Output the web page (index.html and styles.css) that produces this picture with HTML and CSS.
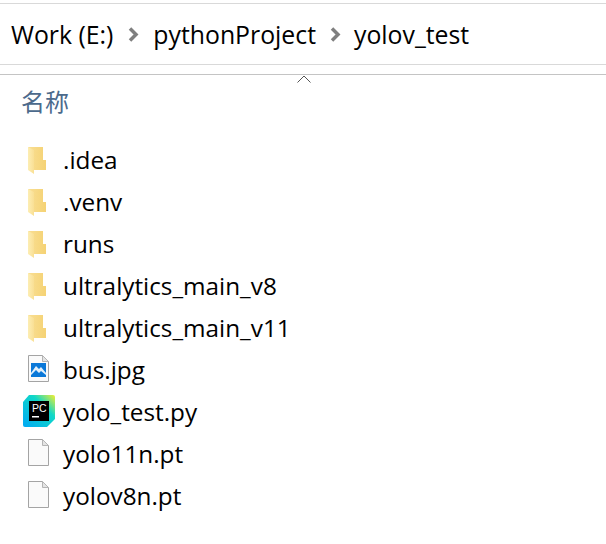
FILE: index.html
```html
<!DOCTYPE html>
<html lang="zh-CN">
<head>
    <meta charset="UTF-8">
    <meta name="viewport" content="width=device-width, initial-scale=1.0">
    <title>yolov_test</title>
    <link rel="stylesheet" href="styles.css">
</head>
<body>
    <svg class="icon-defs" width="0" height="0">
        <defs>
            <linearGradient id="folder-back" x1="0" y1="0" x2="1" y2="0">
                <stop offset="0" stop-color="#f9df94"/>
                <stop offset="1" stop-color="#f5d274"/>
            </linearGradient>
            <linearGradient id="folder-front" x1="0" y1="0" x2="1" y2="0">
                <stop offset="0" stop-color="#fdeeb4"/>
                <stop offset="1" stop-color="#f9df94"/>
            </linearGradient>
            <linearGradient id="pc-logo" x1="0" y1="1" x2="1" y2="0">
                <stop offset="0" stop-color="#00a8f4"/>
                <stop offset="0.65" stop-color="#10d8c8"/>
                <stop offset="1" stop-color="#f4ee30"/>
            </linearGradient>
            <symbol id="folder" viewBox="0 0 18 27">
                <path d="M0 0h15v13h3v10H6v-2z" fill="url(#folder-back)"/>
                <path d="M0 0l6 3v24l-6-4z" fill="url(#folder-front)"/>
            </symbol>
            <symbol id="file" viewBox="0 0 21 27">
                <path d="M.5.5h14l6 6v20H.5z" fill="#fafafa" stroke="#a4a4a4"/>
                <path d="M14.500.5v6h6z" fill="#e4e4e4" stroke="#b4b4b4"/>
            </symbol>
        </defs>
    </svg>

    <nav class="crumbs">
        <span>Work (E:)</span>
        <svg class="crumb-sep" viewBox="0 0 11 15"><path d="M2 1.500l6 6-6 6" fill="none" stroke="#7f7f7f" stroke-width="3.500"/></svg>
        <span>pythonProject</span>
        <svg class="crumb-sep crumb-sep-last" viewBox="0 0 11 15"><path d="M2 1.500l6 6-6 6" fill="none" stroke="#7f7f7f" stroke-width="3.500"/></svg>
        <span>yolov_test</span>
    </nav>

    <div class="col-head">
        <svg class="sort-arrow" viewBox="0 0 14 8"><path d="M.5 7.500L7 1l6.500 6.500" fill="none" stroke="#555" stroke-width="1"/></svg>
        <span class="col-name">名称</span>
    </div>

    <ul class="files">
        <li><svg class="icon icon-folder"><use href="#folder"/></svg>.idea</li>
        <li><svg class="icon icon-folder"><use href="#folder"/></svg>.venv</li>
        <li><svg class="icon icon-folder"><use href="#folder"/></svg>runs</li>
        <li><svg class="icon icon-folder"><use href="#folder"/></svg>ultralytics_main_v8</li>
        <li><svg class="icon icon-folder"><use href="#folder"/></svg>ultralytics_main_v11</li>
        <li>
            <svg class="icon icon-file" viewBox="0 0 21 27">
                <use href="#file" width="21" height="27"/>
                <rect x="3" y="8" width="15" height="14" fill="#0a78d8"/>
                <path d="M3 18l5-7 3 3 2-2 5 6v2l-5-4-2 2-3-3-5 5z" fill="#e2f0fb"/>
            </svg>
            bus.jpg
        </li>
        <li>
            <svg class="icon icon-pc" viewBox="0 0 32 32">
                <path d="M6 0h24a2 2 0 0 1 2 2v22l-8 8H2a2 2 0 0 1-2-2V7z" fill="url(#pc-logo)"/>
                <rect x="6" y="6" width="20" height="20" fill="#000"/>
                <text x="9" y="17" class="pc-text">PC</text>
                <rect x="9" y="21" width="7" height="1.500" fill="#fff"/>
            </svg>
            yolo_test.py
        </li>
        <li><svg class="icon icon-file"><use href="#file"/></svg>yolo11n.pt</li>
        <li><svg class="icon icon-file"><use href="#file"/></svg>yolov8n.pt</li>
    </ul>
</body>
</html>
```

FILE: styles.css
```css
body {
    margin: 0;
    padding: 0;
    background-color: #fff;
    color: #000;
    font-family: "Open Sans", "Noto Sans CJK SC", sans-serif;
    overflow: hidden;
}
.icon-defs {
    position: absolute;
}
.crumbs {
    display: flex;
    align-items: center;
    height: 60px;
    margin-top: 3px;
    padding-left: 11px;
    border-top: 1px solid #d9d9d9;
    border-bottom: 1px solid #d9d9d9;
    font-size: 24.8px;
}
.crumb-sep {
    width: 11px;
    height: 15px;
    margin: 0 14px 0 15px;
}
.crumb-sep-last {
    margin: 0 13px 0 14px;
}
.col-head {
    position: relative;
    height: 64px;
    margin-top: 9px;
    border-top: 1px solid #c4c4c4;
}
.sort-arrow {
    position: absolute;
    left: 297px;
    top: 0;
    width: 14px;
    height: 8px;
}
.col-name {
    display: block;
    padding: 10px 0 0 21px;
    font-size: 24px;
    line-height: 33px;
    color: #4c6a8c;
}
.files {
    list-style: none;
    margin: 0;
    padding: 0;
}
.files li {
    display: flex;
    align-items: center;
    height: 40px;
    padding: 0 0 2px 63px;
    position: relative;
    font-size: 24.3px;
}
.icon {
    position: absolute;
}
.icon-folder {
    left: 28px;
    top: 8px;
    width: 18px;
    height: 27px;
}
.icon-file {
    left: 28px;
    top: 6px;
    width: 21px;
    height: 27px;
}
.icon-pc {
    left: 23px;
    top: 4px;
    width: 32px;
    height: 32px;
}
.pc-text {
    font-family: "Liberation Sans", sans-serif;
    font-size: 10.500px;
    fill: #fff;
}
```
